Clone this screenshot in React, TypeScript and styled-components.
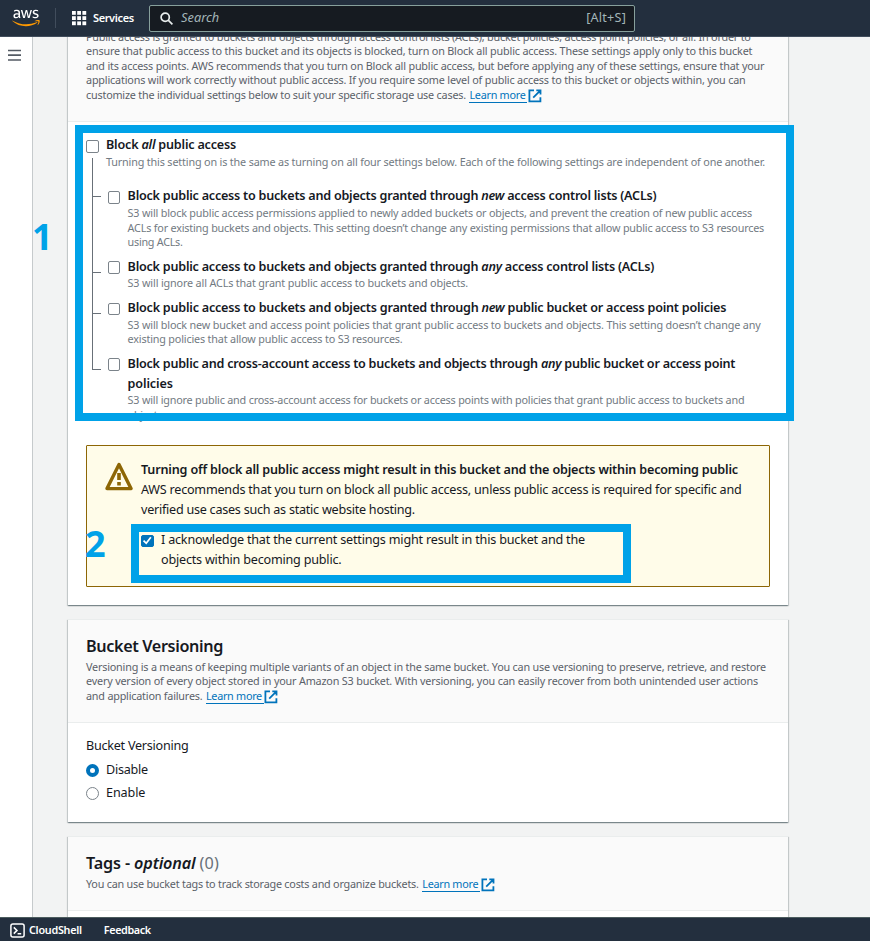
import React from 'react';
import styled, { createGlobalStyle, css } from 'styled-components';
import { FaAws } from 'react-icons/fa';

const GlobalStyle = createGlobalStyle`
  *, *::before, *::after { box-sizing: border-box; }
  html, body { margin: 0; padding: 0; }
  body {
    background: #f2f3f3;
    color: #16191f;
    font-family: "Noto Sans", "Open Sans", sans-serif;
    font-size: 12.6px;
    line-height: 19.8px;
    overflow: hidden;
  }
`;

const highlight = '#00a2e8';

/* ---------- page frame ---------- */

const Page = styled.div`
  position: relative;
  display: flex;
  flex-direction: column;
  width: 870px;
  height: 941px;
  overflow: hidden;
`;

const TopBar = styled.header`
  flex: none;
  display: flex;
  align-items: center;
  height: 37px;
  padding-left: 12px;
  background: #232f3e;
  border-bottom: 1px solid #414d5c;
  color: #fff;
`;

const Logo = styled(FaAws)`
  width: 28px;
  height: 22px;
  margin-left: -0.5px;
  path { fill: url(#aws-fill); }
`;

const BarDivider = styled.span`
  width: 1px;
  height: 20px;
  margin: 0 16px 0 15.5px;
  background: #414d5c;
`;

const ServicesButton = styled.button`
  display: flex;
  align-items: center;
  gap: 6px;
  width: 77px;
  padding: 0;
  border: 0;
  background: none;
  color: #fff;
  font: 600 11px/18px "Noto Sans", sans-serif;
  letter-spacing: -0.38px;
`;

const SearchBox = styled.div`
  display: flex;
  align-items: center;
  width: 486px;
  height: 27px;
  padding: 0 8px 0 10px;
  background: #161b21;
  border: 1px solid #87a09c;
  border-radius: 2px;
  color: #a3b5b8;
`;

const SearchHint = styled.em`
  flex: 1;
  margin-left: 8px;
  font-size: 12.8px;
  letter-spacing: 0.02px;
`;

const Shortcut = styled.span`
  letter-spacing: 0.22px;
`;

const Workspace = styled.div`
  flex: 1;
  display: flex;
  min-height: 0;
`;

const SideRail = styled.nav`
  flex: none;
  width: 33px;
  padding: 12px 0 0 8px;
  background: #fff;
  border-right: 1px solid #c6cacc;
`;

const MenuIcon = styled.svg`
  display: block;
`;

const Scroller = styled.main`
  flex: 1;
  overflow: hidden;
  padding-left: 35px;
`;

const BottomBar = styled.footer`
  flex: none;
  display: flex;
  align-items: center;
  height: 24px;
  padding: 1px 0 0 10px;
  background: #232f3e;
  border-top: 1px solid #4c5c5e;
  color: #fff;
`;

const BottomLink = styled.span<{ $track: number }>`
  display: flex;
  align-items: center;
  gap: 4px;
  margin-right: 22px;
  font-size: 10.8px;
  font-weight: 600;
  letter-spacing: ${p => p.$track}px;
`;

const ShellSvg = styled.svg`
  margin-top: 2px;
`;

/* ---------- panels ---------- */

const Stack = styled.div`
  display: flex;
  flex-direction: column;
  gap: 14px;
  width: 720px;
  margin-top: -37px;
`;

const Panel = styled.section<{ $height: number }>`
  height: ${p => p.$height}px;
  background: #fff;
  border-top: 1px solid #eaeded;
  box-shadow: 0 1px 1px 0 rgba(0, 28, 36, 0.3), 1px 1px 1px 0 rgba(0, 28, 36, 0.15),
    -1px 1px 1px 0 rgba(0, 28, 36, 0.15);
`;

const PanelHeader = styled.div<{ $height: number; $top: number }>`
  height: ${p => p.$height}px;
  padding: ${p => p.$top}px 18px 0;
  background: #fafafa;
  border-bottom: 1px solid #eaeded;
`;

const PanelTitle = styled.h2<{ $track: number }>`
  margin: 0 0 3px;
  font-size: 16.2px;
  font-weight: 600;
  line-height: 19.8px;
  letter-spacing: ${p => p.$track}px;
`;

const Count = styled.span`
  margin-left: 4px;
  color: #687078;
  font-weight: 400;
  letter-spacing: 0.2px;
`;

/* ---------- text ---------- */

type LineProps = { $track: number };

const lineBase = css<LineProps>`
  display: block;
  white-space: nowrap;
  letter-spacing: ${p => p.$track}px;
`;

const Strong = styled.span<LineProps>`
  ${lineBase}
  font-weight: 600;
`;

const Copy = styled.span<LineProps>`
  ${lineBase}
`;

const Small = styled.span<LineProps>`
  ${lineBase}
  font-size: 10.8px;
  line-height: 14.4px;
  color: #5a6169;
`;

const Hint = styled(Small)`
  color: #727a82;
`;

const LinkRow = styled.span`
  display: flex;
  height: 14.4px;
`;

const Link = styled.a`
  display: flex;
  gap: 1px;
  margin-left: 3.5px;
  color: #0073bb;
  font-size: 10.8px;
  line-height: 14.4px;
`;

const LinkText = styled.span`
  width: 58px;
  height: 15px;
  border-bottom: 1px solid #0073bb;
  letter-spacing: -0.27px;
  white-space: nowrap;
`;

const ExternalSvg = styled.svg`
  flex: none;
  margin: 1px 0 0 -0.5px;
`;

function LearnMore() {
  return (
    <Link>
      <LinkText>Learn more</LinkText>
      <ExternalSvg width="14" height="14" viewBox="0 0 14 14" fill="none" stroke="#0073bb" strokeWidth="1.8">
        <path d="M6 1.4H1.4v10.9h11V8.2M8.3 1.3h4.2v4.2M12.2 1.6L5.2 8.6" />
      </ExternalSvg>
    </Link>
  );
}

/* ---------- form controls ---------- */

const Box = styled.span<{ $checked?: boolean }>`
  flex: none;
  display: flex;
  align-items: center;
  justify-content: center;
  width: 12.6px;
  height: 12.6px;
  background: ${p => (p.$checked ? '#0073bb' : '#fff')};
  border: 1px solid ${p => (p.$checked ? '#0073bb' : '#7b838a')};
  border-radius: 2px;
`;

const Radio = styled.span<{ $on?: boolean }>`
  width: 13px;
  height: 13px;
  margin-top: 2px;
  background: #fff;
  border: ${p => (p.$on ? '4px solid #0073bb' : '1px solid #7b838a')};
  border-radius: 50%;
`;

const RadioRow = styled.label`
  display: flex;
  align-items: center;
  gap: 7px;
  height: 23.4px;
`;

const RadioList = styled.div`
  padding-top: 2px;
`;

const Body = styled.div<{ $top: number }>`
  padding: ${p => p.$top}px 18px 0;
`;

/* ---------- settings tree ---------- */

const Root = styled.div`
  display: flex;
  height: 51px;
`;

const Rail = styled.div`
  display: flex;
  flex-direction: column;
  width: 20px;
  padding-top: 4.6px;
`;

const Trunk = styled.span`
  flex: 1;
  margin: 5px 0 0 6px;
  border-left: 1px solid #687078;
`;

const Branches = styled.div`
  height: 257px;
  padding-left: 6px;
`;

const Branch = styled.div`
  display: flex;
`;

const Tick = styled.span<{ $at: number; $last?: boolean }>`
  width: 9px;
  margin-right: 6.6px;
  border-left: 1px solid #687078;
  ${p => p.$last && css`height: ${p.$at}px;`}

  &::before {
    content: '';
    display: block;
    height: ${p => p.$at}px;
    border-bottom: 1px solid #687078;
  }
`;

const BranchBox = styled.span`
  width: 20px;
  padding-top: 4.6px;
`;

const BranchText = styled.div`
  padding-bottom: 7.2px;
`;

type Setting = {
  title: [React.ReactNode, number][];
  hints: [string, number][];
  tick: number;
};

const settings: Setting[] = [
  {
    title: [[<>Block public access to buckets and objects granted through <em>new</em> access control lists (ACLs)</>, -0.236]],
    hints: [
      ['S3 will block public access permissions applied to newly added buckets or objects, and prevent the creation of new public access', -0.179],
      ['ACLs for existing buckets and objects. This setting doesn’t change any existing permissions that allow public access to S3 resources', -0.19],
      ['using ACLs.', -0.271],
    ],
    tick: 11,
  },
  {
    title: [[<>Block public access to buckets and objects granted through <em>any</em> access control lists (ACLs)</>, -0.234]],
    hints: [['S3 will ignore all ACLs that grant public access to buckets and objects.', -0.154]],
    tick: 16,
  },
  {
    title: [[<>Block public access to buckets and objects granted through <em>new</em> public bucket or access point policies</>, -0.23]],
    hints: [
      ['S3 will block new bucket and access point policies that grant public access to buckets and objects. This setting doesn’t change any', -0.168],
      ['existing policies that allow public access to S3 resources.', -0.175],
    ],
    tick: 16,
  },
  {
    title: [
      [<>Block public and cross-account access to buckets and objects through <em>any</em> public bucket or access point</>, -0.242],
      ['policies', -0.14],
    ],
    hints: [
      ['S3 will ignore public and cross-account access for buckets or access points with policies that grant public access to buckets and', -0.19],
      ['objects.', -0.2],
    ],
    tick: 16,
  },
];

/* ---------- warning ---------- */

const Alert = styled.div`
  display: flex;
  height: 142px;
  padding: 14px 18px 0;
  background: #fffce9;
  border: 1px solid #8d6605;
  border-radius: 1px;
`;

const WarningSvg = styled.svg`
  flex: none;
  margin: 2.4px 8px 0 0;
`;

const Acknowledge = styled.label`
  display: flex;
  margin-top: 10.6px;
`;

const AckBox = styled.span`
  width: 20px;
  padding-top: 4.6px;
`;

/* ---------- callouts laid over the page ---------- */

const Frame = styled.div<{ $x: number; $y: number; $w: number; $h: number }>`
  position: absolute;
  left: ${p => p.$x}px;
  top: ${p => p.$y}px;
  width: ${p => p.$w}px;
  height: ${p => p.$h}px;
  border: 8px solid ${highlight};
`;

const StepNumber = styled.span<{ $x: number; $y: number }>`
  position: absolute;
  left: ${p => p.$x}px;
  top: ${p => p.$y}px;
  color: ${highlight};
  font: 700 36px/40px "Noto Sans", "Open Sans", sans-serif;
`;

export default function App() {
  return (
    <Page>
      <GlobalStyle />
      <TopBar>
        <svg width="0" height="0" aria-hidden="true">
          <defs>
            <linearGradient id="aws-fill" x1="0" y1="0" x2="0" y2="1">
              <stop offset="0.64" stopColor="#fff" />
              <stop offset="0.64" stopColor="#ff9900" />
            </linearGradient>
          </defs>
        </svg>
        <Logo />
        <BarDivider />
        <ServicesButton>
          <svg width="15" height="15" viewBox="0 0 15 15" fill="#fff">
            {[0, 5.2, 10.4].map(y => [0, 5.2, 10.4].map(x => <rect key={`${x}-${y}`} x={x} y={y} width="3.8" height="3.8" />))}
          </svg>
          Services
        </ServicesButton>
        <SearchBox>
          <svg width="13" height="13" viewBox="0 0 13 13" fill="none" stroke="#e8eded" strokeWidth="1.7">
            <circle cx="5.2" cy="5.2" r="4.1" />
            <path d="M8.2 8.2L12.4 12.4" />
          </svg>
          <SearchHint>Search</SearchHint>
          <Shortcut>[Alt+S]</Shortcut>
        </SearchBox>
      </TopBar>

      <Workspace>
        <SideRail>
          <MenuIcon width="13" height="13" viewBox="0 0 13 13" stroke="#545b64" strokeWidth="1.7">
            <path d="M0 1.5h13M0 6.2h13M0 11h13" />
          </MenuIcon>
        </SideRail>
        <Scroller>
          <Stack>
            <Panel $height={605}>
              <PanelHeader $height={121} $top={28.9}>
                <Small $track={-0.19}>Public access is granted to buckets and objects through access control lists (ACLs), bucket policies, access point policies, or all. In order to</Small>
                <Small $track={-0.171}>ensure that public access to this bucket and its objects is blocked, turn on Block all public access. These settings apply only to this bucket</Small>
                <Small $track={-0.188}>and its access points. AWS recommends that you turn on Block all public access, but before applying any of these settings, ensure that your</Small>
                <Small $track={-0.169}>applications will work correctly without public access. If you require some level of public access to this bucket or objects within, you can</Small>
                <LinkRow>
                  <Small $track={-0.198}>customize the individual settings below to suit your specific storage use cases.</Small>
                  <LearnMore />
                </LinkRow>
              </PanelHeader>
              <Body $top={13.4}>
                <Root>
                  <Rail>
                    <Box />
                    <Trunk />
                  </Rail>
                  <div>
                    <Strong $track={-0.206}>Block <em>all</em> public access</Strong>
                    <Hint $track={-0.164}>Turning this setting on is the same as turning on all four settings below. Each of the following settings are independent of one another.</Hint>
                  </div>
                </Root>
                <Branches>
                  {settings.map((s, i) => (
                    <Branch key={i}>
                      <Tick $at={s.tick} $last={i === settings.length - 1} />
                      <BranchBox><Box /></BranchBox>
                      <BranchText>
                        {s.title.map(([text, track], n) => <Strong key={n} $track={track}>{text}</Strong>)}
                        {s.hints.map(([text, track], n) => <Hint key={n} $track={track}>{text}</Hint>)}
                      </BranchText>
                    </Branch>
                  ))}
                </Branches>
              </Body>
              <Body $top={1.6}>
                <Alert>
                  <WarningSvg width="28" height="29" viewBox="0 0 28 29" fill="none" stroke="#8d6605">
                    <path d="M14 2.6L26 26.6H2z" strokeWidth="3.4" strokeLinejoin="round" />
                    <path d="M14 11v7M14 20v3.6" strokeWidth="3.6" />
                  </WarningSvg>
                  <div>
                    <Strong $track={-0.18}>Turning off block all public access might result in this bucket and the objects within becoming public</Strong>
                    <Copy $track={-0.224}>AWS recommends that you turn on block all public access, unless public access is required for specific and</Copy>
                    <Copy $track={-0.251}>verified use cases such as static website hosting.</Copy>
                    <Acknowledge>
                      <AckBox>
                        <Box $checked>
                          <svg width="11" height="11" viewBox="0 0 11 11" fill="none" stroke="#fff" strokeWidth="1.8">
                            <path d="M1.6 5.6L4.4 8.4L9.2 2.2" />
                          </svg>
                        </Box>
                      </AckBox>
                      <div>
                        <Copy $track={-0.195}>I acknowledge that the current settings might result in this bucket and the</Copy>
                        <Copy $track={-0.21}>objects within becoming public.</Copy>
                      </div>
                    </Acknowledge>
                  </div>
                </Alert>
              </Body>
            </Panel>

            <Panel $height={203}>
              <PanelHeader $height={103} $top={17}>
                <PanelTitle $track={-0.37}>Bucket Versioning</PanelTitle>
                <Small $track={-0.197}>Versioning is a means of keeping multiple variants of an object in the same bucket. You can use versioning to preserve, retrieve, and restore</Small>
                <Small $track={-0.18}>every version of every object stored in your Amazon S3 bucket. With versioning, you can easily recover from both unintended user actions</Small>
                <LinkRow>
                  <Small $track={-0.2}>and application failures.</Small>
                  <LearnMore />
                </LinkRow>
              </PanelHeader>
              <Body $top={13}>
                <Copy $track={-0.25}>Bucket Versioning</Copy>
                <RadioList>
                  <RadioRow><Radio $on /><Copy $track={-0.25}>Disable</Copy></RadioRow>
                  <RadioRow><Radio /><Copy $track={-0.1}>Enable</Copy></RadioRow>
                </RadioList>
              </Body>
            </Panel>

            <Panel $height={140}>
              <PanelHeader $height={74} $top={17}>
                <PanelTitle $track={-0.149}>
                  Tags - <em>optional</em>
                  <Count>(0)</Count>
                </PanelTitle>
                <LinkRow>
                  <Small $track={-0.218}>You can use bucket tags to track storage costs and organize buckets.</Small>
                  <LearnMore />
                </LinkRow>
              </PanelHeader>
            </Panel>
          </Stack>
        </Scroller>
      </Workspace>

      <BottomBar>
        <BottomLink $track={-0.27}>
          <ShellSvg width="15" height="15" viewBox="0 0 15 15" fill="none" stroke="#fff" strokeWidth="1.5">
            <rect x="0.9" y="0.9" width="13.2" height="13.2" rx="2" />
            <path d="M3.8 4.4L7 7.4L3.8 10.6M7.6 10.8h3.6" />
          </ShellSvg>
          CloudShell
        </BottomLink>
        <BottomLink $track={-0.4}>Feedback</BottomLink>
      </BottomBar>

      <Frame $x={75} $y={125} $w={719} $h={296} />
      <Frame $x={131} $y={524} $w={500} $h={59} />
      <StepNumber $x={32} $y={217}>1</StepNumber>
      <StepNumber $x={85} $y={524}>2</StepNumber>
    </Page>
  );
}
